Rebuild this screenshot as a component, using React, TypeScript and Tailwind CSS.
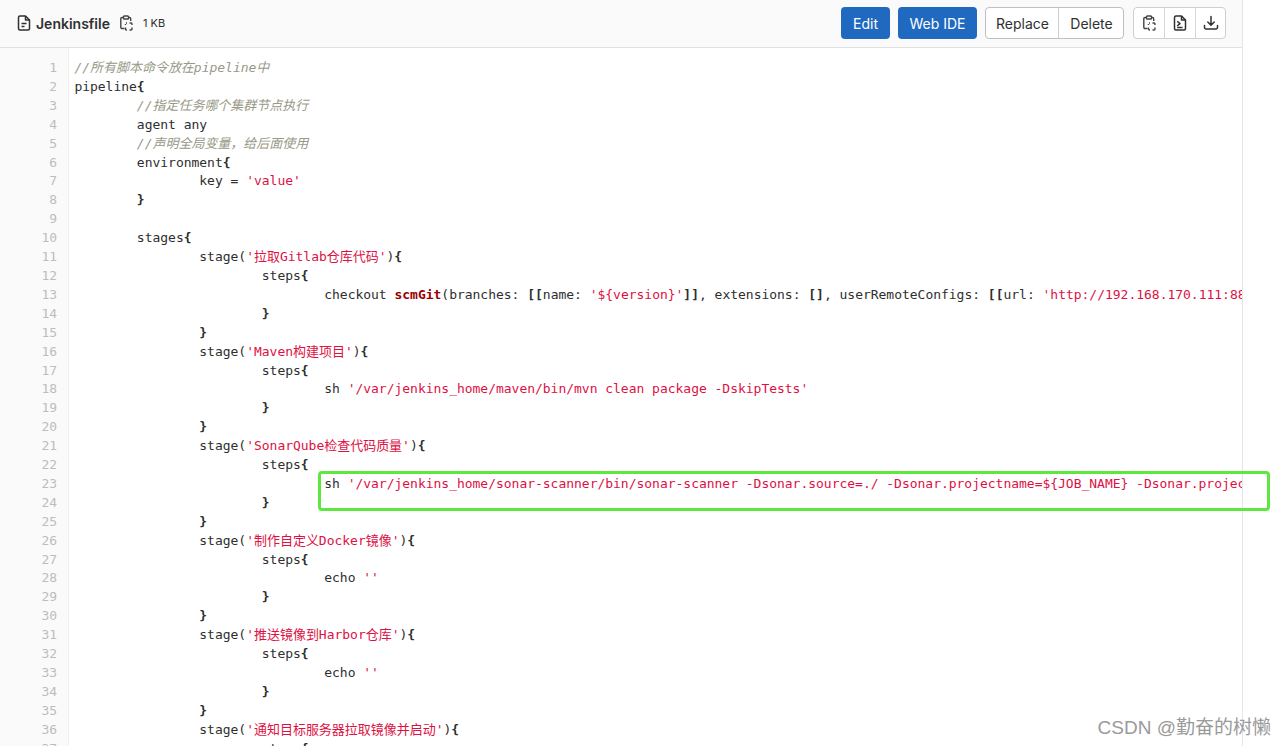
import React from 'react'

type Seg = [string, string]

const n = 'text-[#2e2e2e]'
const b = 'font-bold text-[#2e2e2e]'
const s = 'text-[#dd1144]'
const c = 'italic text-[#999988]'
const f = 'font-bold text-[#990000]'

const stage = (name: string): Seg[] => [
  [n, 'stage('],
  [s, `'${name}'`],
  [n, ')'],
  [b, '{'],
]
const steps: Seg[] = [
  [n, 'steps'],
  [b, '{'],
]
const close: Seg[] = [[b, '}']]
const echo: Seg[] = [
  [n, 'echo '],
  [s, "''"],
]

const lines: [number, Seg[]][] = [
  [0, [[c, '//所有脚本命令放在pipeline中']]],
  [0, [[n, 'pipeline'], [b, '{']]],
  [1, [[c, '//指定任务哪个集群节点执行']]],
  [1, [[n, 'agent any']]],
  [1, [[c, '//声明全局变量，给后面使用']]],
  [1, [[n, 'environment'], [b, '{']]],
  [2, [[n, 'key = '], [s, "'value'"]]],
  [1, close],
  [0, []],
  [1, [[n, 'stages'], [b, '{']]],
  [2, stage('拉取Gitlab仓库代码')],
  [3, steps],
  [
    4,
    [
      [n, 'checkout '],
      [f, 'scmGit'],
      [n, '(branches: '],
      [b, '[['],
      [n, 'name: '],
      [s, "'${version}'"],
      [b, ']]'],
      [n, ', extensions: '],
      [b, '[]'],
      [n, ', userRemoteConfigs: '],
      [b, '[['],
      [n, 'url: '],
      [s, "'http://192.168.170.111:8888/root/demo.git'"],
    ],
  ],
  [3, close],
  [2, close],
  [2, stage('Maven构建项目')],
  [3, steps],
  [4, [[n, 'sh '], [s, "'/var/jenkins_home/maven/bin/mvn clean package -DskipTests'"]]],
  [3, close],
  [2, close],
  [2, stage('SonarQube检查代码质量')],
  [3, steps],
  [
    4,
    [
      [n, 'sh '],
      [s, "'/var/jenkins_home/sonar-scanner/bin/sonar-scanner -Dsonar.source=./ -Dsonar.projectname=${JOB_NAME} -Dsonar.projectKey=${JOB_NAME}'"],
    ],
  ],
  [3, close],
  [2, close],
  [2, stage('制作自定义Docker镜像')],
  [3, steps],
  [4, echo],
  [3, close],
  [2, close],
  [2, stage('推送镜像到Harbor仓库')],
  [3, steps],
  [4, echo],
  [3, close],
  [2, close],
  [2, stage('通知目标服务器拉取镜像并启动')],
  [3, steps],
]

function DocIcon() {
  return (
    <svg width="16" height="16" viewBox="0 0 16 16" fill="none" stroke="#303030" strokeWidth="1.5" strokeLinejoin="round">
      <path d="M2.5 2.5A1.5 1.5 0 0 1 4 1H9.5L13.5 5V13.5A1.5 1.5 0 0 1 12 15H4A1.5 1.5 0 0 1 2.5 13.5Z" />
      <path d="M9.5 1V5H13.5" />
      <path d="M5.5 8.5H10.5M5.5 11.5H8.5" />
    </svg>
  )
}

function ClipboardIcon() {
  return (
    <svg width="16" height="16" viewBox="0 0 16 16" fill="none" stroke="#444" strokeWidth="1.4" strokeLinejoin="round">
      <path d="M5.5 2.5H4A1.2 1.2 0 0 0 2.8 3.7V12.3A1.2 1.2 0 0 0 4 13.5H6.5" />
      <path d="M10.5 2.5H11.5A1.2 1.2 0 0 1 12.7 3.7V6" />
      <rect x="5.5" y="1" width="5" height="3" rx="0.8" />
      <path d="M8 8H9M11.5 8H13A1 1 0 0 1 14 9V10M14 12.5V14A1 1 0 0 1 13 15H11.5M9 15H8.5A1 1 0 0 1 7.5 14V12.5M7.5 10V9" />
    </svg>
  )
}

function DocCodeIcon() {
  return (
    <svg width="16" height="16" viewBox="0 0 16 16" fill="none" stroke="#303030" strokeWidth="1.5" strokeLinejoin="round">
      <path d="M2.5 2.5A1.5 1.5 0 0 1 4 1H9.5L13.5 5V13.5A1.5 1.5 0 0 1 12 15H4A1.5 1.5 0 0 1 2.5 13.5Z" />
      <path d="M9.5 1V5H13.5" />
      <path d="M5.2 6.2L8 8.6L5.2 11M5.2 12.6H10.5" />
    </svg>
  )
}

function DownloadIcon() {
  return (
    <svg width="16" height="16" viewBox="0 0 16 16" fill="none" stroke="#303030" strokeWidth="1.5" strokeLinecap="round" strokeLinejoin="round">
      <path d="M8 1.5V10M4.8 7L8 10.2L11.2 7" />
      <path d="M1.5 10.5V12.5A1.5 1.5 0 0 0 3 14H13A1.5 1.5 0 0 0 14.5 12.5V10.5" />
    </svg>
  )
}

export default function App() {
  return (
    <div className="relative h-[746px] w-[1286px] overflow-hidden bg-white font-['Inter','Liberation_Sans',sans-serif]">
      <div className="h-full w-[1243px] overflow-hidden border-r border-[#e5e5e5]">
        <header className="flex h-[48px] items-center justify-between border-b border-[#e0e0e0] bg-[#fafafa] pb-[1px] pl-[16px] pr-[16px]">
          <div className="flex items-center">
            <DocIcon />
            <span className="ml-[4px] text-[14px] font-semibold text-[#303030]">Jenkinsfile</span>
            <span className="ml-[8px] flex">
              <ClipboardIcon />
            </span>
            <span className="ml-[9px] text-[11px] text-[#303030]">1 KB</span>
          </div>
          <div className="flex items-center text-[14px]">
            <button className="h-[32px] w-[49px] rounded bg-[#1f69c0] text-white">Edit</button>
            <button className="ml-[8px] h-[32px] w-[79px] rounded bg-[#1f69c0] text-white">Web IDE</button>
            <div className="ml-[8px] flex h-[32px] rounded border border-[#bfbfbf] bg-white text-[#303030]">
              <button className="w-[73px] border-r border-[#cfcfcf] pl-[1px]">Replace</button>
              <button className="w-[64px] pl-[1px]">Delete</button>
            </div>
            <div className="ml-[9px] flex h-[32px] rounded border border-[#cfcfcf] bg-white">
              <button className="flex w-[31px] items-center justify-center border-r border-[#d8d8d8]">
                <ClipboardIcon />
              </button>
              <button className="flex w-[31px] items-center justify-center border-r border-[#d8d8d8]">
                <DocCodeIcon />
              </button>
              <button className="flex w-[29px] items-center justify-center">
                <DownloadIcon />
              </button>
            </div>
          </div>
        </header>

        <div className="flex font-['DejaVu_Sans_Mono','Noto_Sans_CJK_SC',monospace] text-[13px] leading-[18.92px] tracking-[-0.02px]">
          <div className="h-[698px] w-[69px] shrink-0 border-r border-[#f0f0f0] bg-[#fafafa] pr-[11px] pt-[11px] text-right text-[#bdbdbd]">
            {lines.map((_, i) => (
              <div key={i} className="h-[18.92px]">{i + 1}</div>
            ))}
          </div>
          <div className="min-w-0 flex-1 overflow-hidden pl-[5.4px] pt-[11px]">
            {lines.map(([indent, segs], i) => (
              <div key={i} className="h-[18.92px] whitespace-pre">
                {'        '.repeat(indent)}
                {segs.map(([cls, text], j) => (
                  <span key={j} className={cls}>{text}</span>
                ))}
              </div>
            ))}
          </div>
        </div>
      </div>

      {/* highlight drawn over the screenshot */}
      <div className="absolute left-[318px] top-[471px] h-[40px] w-[952px] rounded-[4px] border-[3px] border-[#5ee83f]" />
      <div className="absolute right-[15px] top-[714px] font-['Liberation_Sans','Noto_Sans_CJK_SC',sans-serif] text-[19px] text-[#9a9a9a]">
        CSDN @勤奋的树懒
      </div>
    </div>
  )
}
